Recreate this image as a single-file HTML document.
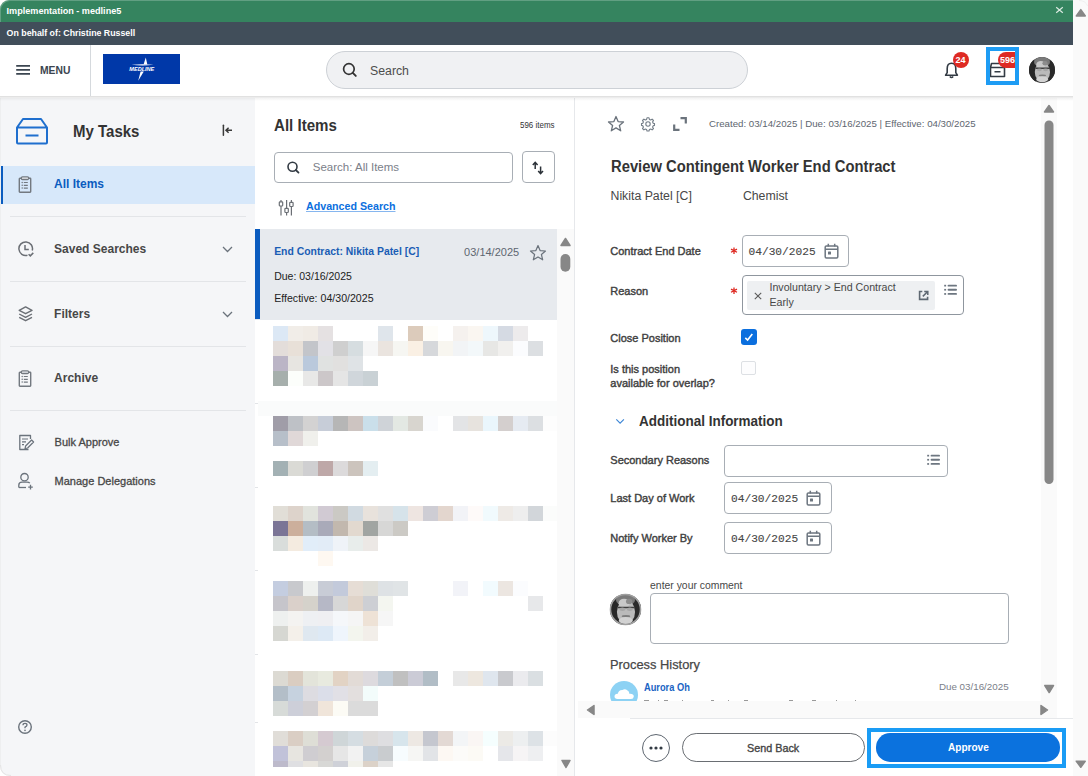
<!DOCTYPE html>
<html><head><meta charset="utf-8"><style>
html,body{margin:0;padding:0;width:1088px;height:776px;overflow:hidden;background:#fff;}
body{position:relative;font-family:"Liberation Sans",sans-serif;}
.t{position:absolute;white-space:nowrap;line-height:1;}
svg{overflow:visible;}
</style></head><body>
<div style="position:absolute;left:1073px;top:0px;width:15px;height:776px;background:#fafafa;"></div><svg style="position:absolute;left:1073px;top:0px" width="15" height="776" viewBox="0 0 15 776"><path d="M7.8 9.6 L12.3 16 L3.3 16 Z" fill="#878787" stroke="#878787" stroke-width="1.5" stroke-linejoin="round"/><path d="M3.3 761.2 L12.2 761.2 L7.8 767.3 Z" fill="#878787" stroke="#878787" stroke-width="1.5" stroke-linejoin="round"/><path d="M6 0.5 Q13 0.8 14.5 6" fill="none" stroke="#f0f0f0" stroke-width="1"/></svg><div style="position:absolute;left:0px;top:0px;width:1073px;height:22px;background:#35845f;border-top-left-radius:9px;box-shadow:inset 1px 1px 0 rgba(255,255,255,0.22);"></div><div style="position:absolute;left:0px;top:22px;width:1px;height:23px;background:rgba(255,255,255,0.12);"></div><div class="t" style="left:6.6px;top:6.60px;font-size:9.1px;color:#fff;font-weight:bold;">Implementation - medline5</div><svg style="position:absolute;left:1055px;top:6px" width="9" height="8" viewBox="0 0 9 8"><path d="M1.2 1.2 L7.8 6.8 M7.8 1.2 L1.2 6.8" stroke="#dcebe2" stroke-width="1.15"/></svg><div style="position:absolute;left:0px;top:22px;width:1073px;height:23px;background:#414e5a;"></div><div class="t" style="left:6.6px;top:29.05px;font-size:8.8px;color:#fff;font-weight:bold;">On behalf of: Christine Russell</div><div style="position:absolute;left:0px;top:45px;width:1073px;height:51px;background:#fff;"></div><svg style="position:absolute;left:16px;top:64px" width="15" height="11" viewBox="0 0 15 11"><path d="M0.2 1.8 H14 M0.2 5.8 H14 M0.2 9.8 H14" stroke="#3b4550" stroke-width="1.7"/></svg><div class="t" style="left:39.60px;top:66.00px;font-size:10.4px;color:#3b4550;font-weight:bold;transform:scaleX(0.9926);transform-origin:0 0;">MENU</div><div style="position:absolute;left:90px;top:45px;width:1px;height:51px;background:#d5d9dd;"></div><div style="position:absolute;left:103px;top:53.5px;width:77px;height:30.5px;background:#0038a8;"></div><svg style="position:absolute;left:103px;top:53.5px" width="77" height="31" viewBox="0 0 77 31"><path d="M42.8 3.6 L44.3 10.6 L40.6 10.6 Z" fill="#fff"/><path d="M28.5 10.8 Q39.5 9.6 50.5 10.8 Q39.5 12 28.5 10.8 Z" fill="#fff"/><text x="38.8" y="16.8" font-size="5.6" font-style="italic" font-weight="bold" fill="#fff" text-anchor="middle" font-family="Liberation Sans" textLength="25" lengthAdjust="spacingAndGlyphs">MEDLINE</text><path d="M37.6 17.6 L40.8 17.6 L35.2 26.8 Z" fill="#fff"/></svg><div style="position:absolute;left:326px;top:51px;width:422px;height:38px;background:#f0f1f3;border:1px solid #cdd1d6;border-radius:19px;box-sizing:border-box;"></div><svg style="position:absolute;left:342px;top:62px" width="16" height="16" viewBox="0 0 16 16"><circle cx="6.9" cy="7" r="5.3" fill="none" stroke="#333" stroke-width="1.7"/><path d="M10.8 10.9 L13.8 13.9" stroke="#333" stroke-width="1.9" stroke-linecap="round"/></svg><div class="t" style="left:370px;top:65.09px;font-size:12.3px;color:#4d4d4d;font-weight:normal;">Search</div><svg style="position:absolute;left:944px;top:61px" width="15" height="18" viewBox="0 0 15 18"><path d="M7.5 2.2 C4.6 2.2 3.2 4.6 3.2 7.4 V11.6 L1.6 14.2 H13.4 L11.8 11.6 V7.4 C11.8 4.6 10.4 2.2 7.5 2.2 Z" fill="none" stroke="#333b44" stroke-width="1.6" stroke-linejoin="round"/><path d="M5.8 15.6 Q7.5 17.6 9.2 15.6" fill="none" stroke="#333b44" stroke-width="1.5"/></svg><div style="position:absolute;left:953px;top:52px;width:16px;height:16px;background:#de2a23;border-radius:50%;"></div><div class="t" style="left:955.5px;top:55.98px;font-size:9px;color:#fff;font-weight:bold;">24</div><svg style="position:absolute;left:989px;top:62px" width="17" height="16" viewBox="0 0 17 16"><path d="M2.5 1.5 H13.5 L15.5 5.5 V14.5 H1.5 V5.5 Z M1.5 5.5 H15.5 M5.5 9.8 H11.5" fill="none" stroke="#333b44" stroke-width="1.6" stroke-linejoin="round"/></svg><div style="position:absolute;left:998px;top:52px;width:20px;height:16px;background:#de2a23;border-radius:8px 0 0 8px;"></div><div class="t" style="left:1000px;top:55.98px;font-size:9px;color:#fff;font-weight:bold;">596</div><div style="position:absolute;left:986px;top:47px;width:33px;height:38px;border:4px solid #1e9cf4;box-sizing:border-box;"></div><div style="position:absolute;left:1028.5px;top:57px;width:26px;height:26px"><svg width="26" height="26" viewBox="0 0 26 26" style="display:block"><defs><clipPath id="avc1"><circle cx="13" cy="13" r="13"/></clipPath></defs><g clip-path="url(#avc1)"><rect width="26" height="26" fill="#3c3c3c"/><ellipse cx="4" cy="15" rx="4.5" ry="12" fill="#262626"/><ellipse cx="22.5" cy="15" rx="4" ry="12" fill="#2a2a2a"/><ellipse cx="13" cy="5" rx="8" ry="5" fill="#7a7a7a"/><ellipse cx="13.4" cy="15" rx="7.6" ry="10" fill="#bababa"/><ellipse cx="11.8" cy="7.8" rx="4.6" ry="3.8" fill="#c8c8c8"/><ellipse cx="16" cy="6.2" rx="2.6" ry="2.2" fill="#8c8c8c"/><path d="M6.5 11.3 H21" stroke="#3f3f3f" stroke-width="1.4"/><ellipse cx="10.4" cy="12.8" rx="2.5" ry="1.4" fill="#a6a6a6"/><ellipse cx="16.6" cy="12.8" rx="2.5" ry="1.4" fill="#a6a6a6"/><ellipse cx="13.4" cy="18.6" rx="3.6" ry="1" fill="#7e7e7e"/><ellipse cx="13.2" cy="22.2" rx="5.8" ry="3" fill="#d2d2d2"/></g></svg></div><div style="position:absolute;left:0px;top:98px;width:255px;height:678px;background:#f5f6f8;border-bottom-left-radius:8px;"></div><svg style="position:absolute;left:15px;top:117px" width="34" height="28" viewBox="0 0 34 28"><path d="M8 2 H26 L32 10.5 V25.5 Q32 26.5 31 26.5 H3 Q2 26.5 2 25.5 V10.5 Z M2 10.5 H32 M10.5 18.5 H23.5" fill="none" stroke="#1f6fce" stroke-width="2" stroke-linejoin="round"/></svg><div class="t" style="left:73.40px;top:122.56px;font-size:17.3px;color:#333;font-weight:bold;transform:scaleX(0.8677);transform-origin:0 0;">My Tasks</div><svg style="position:absolute;left:221px;top:124px" width="12" height="12" viewBox="0 0 12 12"><path d="M2.4 1.2 V11.3" stroke="#3a3a3a" stroke-width="1.5" stroke-linecap="round"/><path d="M11 6.2 H5.2 M7.6 3.7 L5 6.2 L7.6 8.7" fill="none" stroke="#3a3a3a" stroke-width="1.5"/></svg><div style="position:absolute;left:0px;top:166px;width:255px;height:38px;background:#d7e8fa;"></div><div style="position:absolute;left:0px;top:166px;width:3px;height:38px;background:#0b5cbf;"></div><svg style="position:absolute;left:18px;top:176px" width="15" height="17" viewBox="0 0 15 17"><g stroke="#737980" fill="none"><rect x="1.3" y="2.2" width="11.4" height="14" rx="0.6" stroke-width="1.4"/><rect x="3.3" y="0.9" width="7.4" height="2.6" rx="1.2" stroke-width="1.3" fill="#eef1f4"/><path d="M5.8 6.5 H9.8 M5.8 9.3 H9.8 M5.8 12.1 H9.8" stroke-width="1.2"/></g><g fill="#737980"><circle cx="4.2" cy="6.5" r="0.75"/><circle cx="4.2" cy="9.3" r="0.75"/><circle cx="4.2" cy="12.1" r="0.75"/></g></svg><div class="t" style="left:54px;top:178.24px;font-size:12px;color:#0b5cbf;font-weight:bold;">All Items</div><div style="position:absolute;left:9.5px;top:216px;width:236px;height:1px;background:#e3e5e8;"></div><div style="position:absolute;left:9.5px;top:281px;width:236px;height:1px;background:#e3e5e8;"></div><div style="position:absolute;left:9.5px;top:345.5px;width:236px;height:1px;background:#e3e5e8;"></div><div style="position:absolute;left:9.5px;top:410px;width:236px;height:1px;background:#e3e5e8;"></div><svg style="position:absolute;left:17px;top:240px" width="18" height="18" viewBox="0 0 18 18"><g fill="none" stroke="#6b6f75" stroke-width="1.5"><path d="M10.46 15.27 A6.8 6.8 0 1 1 15.27 10.46"/><path d="M8 5 V9.4 H11.8"/><path d="M11.6 14.3 L13.3 15.9 L16.3 12.9"/></g></svg><div class="t" style="left:54.1px;top:243.14px;font-size:12px;color:#474747;font-weight:bold;">Saved Searches</div><svg style="position:absolute;left:222px;top:246px" width="11" height="7" viewBox="0 0 11 7"><path d="M1 1 L5.5 5.5 L10 1" fill="none" stroke="#6b737c" stroke-width="1.3"/></svg><svg style="position:absolute;left:18px;top:306px" width="16" height="16" viewBox="0 0 16 16"><g fill="none" stroke="#6b6f75" stroke-width="1.4" stroke-linejoin="round"><path d="M7.6 0.9 L14 4.3 L7.6 7.7 L1.2 4.3 Z"/><path d="M1.2 8 L7.6 11.4 L14 8"/><path d="M1.2 11.3 L7.6 14.7 L14 11.3"/></g></svg><div class="t" style="left:54.1px;top:307.54px;font-size:12px;color:#474747;font-weight:bold;">Filters</div><svg style="position:absolute;left:222px;top:310.5px" width="11" height="7" viewBox="0 0 11 7"><path d="M1 1 L5.5 5.5 L10 1" fill="none" stroke="#6b737c" stroke-width="1.3"/></svg><svg style="position:absolute;left:18px;top:369.5px" width="15" height="17" viewBox="0 0 15 17"><g stroke="#737980" fill="none"><rect x="1.3" y="2.2" width="11.4" height="14" rx="0.6" stroke-width="1.4"/><rect x="3.3" y="0.9" width="7.4" height="2.6" rx="1.2" stroke-width="1.3" fill="#eef1f4"/><path d="M5.8 6.5 H9.8 M5.8 9.3 H9.8 M5.8 12.1 H9.8" stroke-width="1.2"/></g><g fill="#737980"><circle cx="4.2" cy="6.5" r="0.75"/><circle cx="4.2" cy="9.3" r="0.75"/><circle cx="4.2" cy="12.1" r="0.75"/></g></svg><div class="t" style="left:54.1px;top:372.14px;font-size:12px;color:#474747;font-weight:bold;">Archive</div><svg style="position:absolute;left:18px;top:434px" width="17" height="17" viewBox="0 0 17 17"><path d="M10.5 15.5 H1.8 V1.5 H12.5 V5" fill="none" stroke="#6b737c" stroke-width="1.3" stroke-linejoin="round"/><path d="M4 5 H10 M4 7.8 H8 M4 10.6 H6" stroke="#6b737c" stroke-width="1.2"/><path d="M7 14.8 L7.6 12 L13.6 6 L15.6 8 L9.6 14 Z" fill="none" stroke="#6b737c" stroke-width="1.2" stroke-linejoin="round"/></svg><div class="t" style="left:54.6px;top:436.69px;font-size:11px;color:#474747;font-weight:normal;-webkit-text-stroke:0.3px #474747;">Bulk Approve</div><svg style="position:absolute;left:17px;top:472px" width="18" height="18" viewBox="0 0 18 18"><circle cx="7.5" cy="5.2" r="3.7" fill="none" stroke="#6b737c" stroke-width="1.3"/><path d="M1.8 15.5 V13.2 Q1.8 10.2 5 10.2 H10 Q12 10.2 12.8 11.2" fill="none" stroke="#6b737c" stroke-width="1.3"/><path d="M1.8 15.5 H9" stroke="#6b737c" stroke-width="1.3"/><path d="M13.5 12.8 V17.5 M11.2 15.2 H15.8" stroke="#6b737c" stroke-width="1.3"/></svg><div class="t" style="left:54.6px;top:475.59px;font-size:11px;color:#474747;font-weight:normal;-webkit-text-stroke:0.3px #474747;">Manage Delegations</div><svg style="position:absolute;left:17px;top:719px" width="16" height="16" viewBox="0 0 16 16"><circle cx="8" cy="8" r="6.3" fill="none" stroke="#6b737c" stroke-width="1.4"/><path d="M6 6.2 Q6 4.3 8 4.3 Q10 4.3 10 6 Q10 7.3 8 8.2 V9.3" fill="none" stroke="#6b737c" stroke-width="1.3"/><circle cx="8" cy="11.4" r="0.8" fill="#6b737c"/></svg><div style="position:absolute;left:255px;top:98px;width:319px;height:678px;background:#fff;"></div><div style="position:absolute;left:574px;top:98px;width:1px;height:678px;background:#e6e8eb;"></div><div class="t" style="left:274.30px;top:116.82px;font-size:16.4px;color:#333;font-weight:bold;transform:scaleX(0.9198);transform-origin:0 0;">All Items</div><div class="t" style="left:519.50px;top:121.15px;font-size:8.8px;color:#333;font-weight:normal;transform:scaleX(0.9044);transform-origin:0 0;">596 items</div><div style="position:absolute;left:274.3px;top:151.5px;width:238.5px;height:31.5px;border:1px solid #a8aeb5;border-radius:4px;box-sizing:border-box;"></div><svg style="position:absolute;left:280px;top:155px" width="30" height="25" viewBox="0 0 30 25"><circle cx="12.5" cy="11.7" r="4.5" fill="none" stroke="#333b44" stroke-width="1.6"/><path d="M15.8 15 L18.5 17.6" stroke="#333b44" stroke-width="1.8" stroke-linecap="round"/></svg><div class="t" style="left:312.8px;top:162.27px;font-size:11.5px;color:#7b8089;font-weight:normal;">Search: All Items</div><div style="position:absolute;left:522px;top:151px;width:32.5px;height:32px;border:1px solid #a8aeb5;border-radius:4px;box-sizing:border-box;"></div><svg style="position:absolute;left:522px;top:151px" width="34" height="34" viewBox="0 0 34 34"><path d="M13.2 18 V11.5 M10.8 14 L13.2 11.3 L15.6 14" fill="none" stroke="#2b3138" stroke-width="1.5"/><path d="M18.6 15.6 V22.5 M16.2 20 L18.6 22.7 L21 20" fill="none" stroke="#2b3138" stroke-width="1.5"/></svg><svg style="position:absolute;left:276px;top:198px" width="20" height="20" viewBox="0 0 20 20"><g stroke="#6b6f75" stroke-width="1.2" fill="#fff"><path d="M5 2 V17.5 M10.6 2 V17.5 M15.4 2 V17.5"/><rect x="3.3" y="3.8" width="3.4" height="4.2" rx="0.8"/><rect x="8.9" y="10.3" width="3.4" height="4.2" rx="0.8"/><rect x="13.7" y="4.3" width="3.4" height="4.2" rx="0.8"/></g></svg><div class="t" style="left:306.00px;top:201.05px;font-size:11.4px;color:#0b6fde;font-weight:bold;transform:scaleX(0.9362);transform-origin:0 0;text-decoration:underline;text-decoration-color:#86b6ef;text-underline-offset:1px;">Advanced Search</div><div style="position:absolute;left:255px;top:229px;width:302px;height:90.8px;background:#e7eaee;"></div><div style="position:absolute;left:255px;top:229px;width:5px;height:90.2px;background:#0b5cbf;"></div><div class="t" style="left:274.2px;top:246.80px;font-size:10.4px;color:#1a5db5;font-weight:bold;">End Contract: Nikita Patel [C]</div><div class="t" style="left:464.1px;top:246.59px;font-size:11px;color:#5e6670;font-weight:normal;">03/14/2025</div><svg style="position:absolute;left:529px;top:244px" width="18" height="17" viewBox="0 0 18 17"><path d="M9 1.5 L11.1 6.6 L16.5 7 L12.4 10.5 L13.7 15.8 L9 12.9 L4.3 15.8 L5.6 10.5 L1.5 7 L6.9 6.6 Z" fill="none" stroke="#6b737c" stroke-width="1.2" stroke-linejoin="round"/></svg><div class="t" style="left:274.2px;top:270.51px;font-size:10.5px;color:#222;font-weight:normal;">Due: 03/16/2025</div><div class="t" style="left:274.2px;top:292.63px;font-size:10.6px;color:#222;font-weight:normal;">Effective: 04/30/2025</div><div style="position:absolute;left:255px;top:722px;width:3px;height:1px;background:#e2e4e7"></div><div style="position:absolute;left:255px;top:654px;width:3px;height:1px;background:#e2e4e7"></div><div style="position:absolute;left:255px;top:570px;width:3px;height:1px;background:#e2e4e7"></div><div style="position:absolute;left:255px;top:486.5px;width:3px;height:1px;background:#e2e4e7"></div><div style="position:absolute;left:255px;top:403px;width:3px;height:1px;background:#e2e4e7"></div><div style="position:absolute;left:273.3px;top:325.8px;width:15.0px;height:15.0px;background:#DCE8F5"></div><div style="position:absolute;left:288.3px;top:325.8px;width:15.0px;height:15.0px;background:#F1EDE8"></div><div style="position:absolute;left:303.3px;top:325.8px;width:15.0px;height:15.0px;background:#F0EBE5"></div><div style="position:absolute;left:318.3px;top:325.8px;width:15.0px;height:15.0px;background:#E5E1E2"></div><div style="position:absolute;left:378.3px;top:325.8px;width:15.0px;height:15.0px;background:#DFE5EB"></div><div style="position:absolute;left:408.3px;top:325.8px;width:15.0px;height:15.0px;background:#DCCBBB"></div><div style="position:absolute;left:423.3px;top:325.8px;width:15.0px;height:15.0px;background:#FEFDF9"></div><div style="position:absolute;left:453.3px;top:325.8px;width:15.0px;height:15.0px;background:#F5F1EE"></div><div style="position:absolute;left:468.3px;top:325.8px;width:15.0px;height:15.0px;background:#FAF6F1"></div><div style="position:absolute;left:483.3px;top:325.8px;width:15.0px;height:15.0px;background:#EEF7FC"></div><div style="position:absolute;left:498.3px;top:325.8px;width:15.0px;height:15.0px;background:#D5DAE3"></div><div style="position:absolute;left:513.3px;top:325.8px;width:15.0px;height:15.0px;background:#EDEBEC"></div><div style="position:absolute;left:273.3px;top:340.8px;width:15.0px;height:15.0px;background:#E3DDDA"></div><div style="position:absolute;left:288.3px;top:340.8px;width:15.0px;height:15.0px;background:#E8E0D8"></div><div style="position:absolute;left:303.3px;top:340.8px;width:15.0px;height:15.0px;background:#C3C5CA"></div><div style="position:absolute;left:318.3px;top:340.8px;width:15.0px;height:15.0px;background:#E2E1E6"></div><div style="position:absolute;left:333.3px;top:340.8px;width:15.0px;height:15.0px;background:#CFCFCF"></div><div style="position:absolute;left:348.3px;top:340.8px;width:15.0px;height:15.0px;background:#D6DDE0"></div><div style="position:absolute;left:363.3px;top:340.8px;width:15.0px;height:15.0px;background:#F6F6F6"></div><div style="position:absolute;left:378.3px;top:340.8px;width:15.0px;height:15.0px;background:#EAE4DF"></div><div style="position:absolute;left:393.3px;top:340.8px;width:15.0px;height:15.0px;background:#F6F6F2"></div><div style="position:absolute;left:408.3px;top:340.8px;width:15.0px;height:15.0px;background:#FAF0E4"></div><div style="position:absolute;left:423.3px;top:340.8px;width:15.0px;height:15.0px;background:#D6D8DB"></div><div style="position:absolute;left:438.3px;top:340.8px;width:15.0px;height:15.0px;background:#F8F6F0"></div><div style="position:absolute;left:453.3px;top:340.8px;width:15.0px;height:15.0px;background:#F2F4F6"></div><div style="position:absolute;left:468.3px;top:340.8px;width:15.0px;height:15.0px;background:#F3F8FA"></div><div style="position:absolute;left:483.3px;top:340.8px;width:15.0px;height:15.0px;background:#E7E7E5"></div><div style="position:absolute;left:498.3px;top:340.8px;width:15.0px;height:15.0px;background:#F1F0EE"></div><div style="position:absolute;left:513.3px;top:340.8px;width:15.0px;height:15.0px;background:#FBFCFE"></div><div style="position:absolute;left:528.3px;top:340.8px;width:15.0px;height:15.0px;background:#DCDFE2"></div><div style="position:absolute;left:273.3px;top:355.8px;width:15.0px;height:15.0px;background:#BBB5C6"></div><div style="position:absolute;left:288.3px;top:355.8px;width:15.0px;height:15.0px;background:#E7E5E1"></div><div style="position:absolute;left:303.3px;top:355.8px;width:15.0px;height:15.0px;background:#BAC9DC"></div><div style="position:absolute;left:318.3px;top:355.8px;width:15.0px;height:15.0px;background:#E0E2E1"></div><div style="position:absolute;left:333.3px;top:355.8px;width:15.0px;height:15.0px;background:#E1E0DF"></div><div style="position:absolute;left:348.3px;top:355.8px;width:15.0px;height:15.0px;background:#DFE3E6"></div><div style="position:absolute;left:273.3px;top:370.8px;width:15.0px;height:15.0px;background:#A6AFAC"></div><div style="position:absolute;left:288.3px;top:370.8px;width:15.0px;height:15.0px;background:#FCFEFB"></div><div style="position:absolute;left:303.3px;top:370.8px;width:15.0px;height:15.0px;background:#E8E8E7"></div><div style="position:absolute;left:318.3px;top:370.8px;width:15.0px;height:15.0px;background:#CCC7C9"></div><div style="position:absolute;left:333.3px;top:370.8px;width:15.0px;height:15.0px;background:#E5E5E5"></div><div style="position:absolute;left:348.3px;top:370.8px;width:15.0px;height:15.0px;background:#D0D6DB"></div><div style="position:absolute;left:363.3px;top:370.8px;width:15.0px;height:15.0px;background:#C9D1D5"></div><div style="position:absolute;left:258.0px;top:400.8px;width:30.3px;height:15.0px;background:#FAFBFB"></div><div style="position:absolute;left:288.3px;top:400.8px;width:15.0px;height:15.0px;background:#FAFBFB"></div><div style="position:absolute;left:303.3px;top:400.8px;width:15.0px;height:15.0px;background:#FAFBFB"></div><div style="position:absolute;left:318.3px;top:400.8px;width:15.0px;height:15.0px;background:#FAFBFB"></div><div style="position:absolute;left:333.3px;top:400.8px;width:15.0px;height:15.0px;background:#FAFBFB"></div><div style="position:absolute;left:348.3px;top:400.8px;width:15.0px;height:15.0px;background:#FAFBFB"></div><div style="position:absolute;left:363.3px;top:400.8px;width:15.0px;height:15.0px;background:#FAFBFB"></div><div style="position:absolute;left:378.3px;top:400.8px;width:15.0px;height:15.0px;background:#FAFBFB"></div><div style="position:absolute;left:393.3px;top:400.8px;width:15.0px;height:15.0px;background:#FAFBFB"></div><div style="position:absolute;left:408.3px;top:400.8px;width:15.0px;height:15.0px;background:#FAFBFB"></div><div style="position:absolute;left:423.3px;top:400.8px;width:15.0px;height:15.0px;background:#FAFBFB"></div><div style="position:absolute;left:438.3px;top:400.8px;width:15.0px;height:15.0px;background:#FAFBFB"></div><div style="position:absolute;left:453.3px;top:400.8px;width:15.0px;height:15.0px;background:#FAFBFB"></div><div style="position:absolute;left:468.3px;top:400.8px;width:15.0px;height:15.0px;background:#FAFBFB"></div><div style="position:absolute;left:483.3px;top:400.8px;width:15.0px;height:15.0px;background:#FAFBFB"></div><div style="position:absolute;left:498.3px;top:400.8px;width:15.0px;height:15.0px;background:#FAFBFB"></div><div style="position:absolute;left:513.3px;top:400.8px;width:15.0px;height:15.0px;background:#FAFBFB"></div><div style="position:absolute;left:528.3px;top:400.8px;width:15.0px;height:15.0px;background:#FAFBFB"></div><div style="position:absolute;left:543.3px;top:400.8px;width:13.7px;height:15.0px;background:#FAFBFB"></div><div style="position:absolute;left:273.3px;top:415.8px;width:15.0px;height:15.0px;background:#A09DA8"></div><div style="position:absolute;left:288.3px;top:415.8px;width:15.0px;height:15.0px;background:#BEC1C6"></div><div style="position:absolute;left:303.3px;top:415.8px;width:15.0px;height:15.0px;background:#D3D2D2"></div><div style="position:absolute;left:318.3px;top:415.8px;width:15.0px;height:15.0px;background:#C7CDD8"></div><div style="position:absolute;left:333.3px;top:415.8px;width:15.0px;height:15.0px;background:#B6B6B6"></div><div style="position:absolute;left:348.3px;top:415.8px;width:15.0px;height:15.0px;background:#CDC4C1"></div><div style="position:absolute;left:363.3px;top:415.8px;width:15.0px;height:15.0px;background:#CADFEA"></div><div style="position:absolute;left:378.3px;top:415.8px;width:15.0px;height:15.0px;background:#CFD3D8"></div><div style="position:absolute;left:393.3px;top:415.8px;width:15.0px;height:15.0px;background:#E3E8E3"></div><div style="position:absolute;left:408.3px;top:415.8px;width:15.0px;height:15.0px;background:#D8D5CF"></div><div style="position:absolute;left:423.3px;top:415.8px;width:15.0px;height:15.0px;background:#FAFBFD"></div><div style="position:absolute;left:453.3px;top:415.8px;width:15.0px;height:15.0px;background:#E3E4E6"></div><div style="position:absolute;left:468.3px;top:415.8px;width:15.0px;height:15.0px;background:#E7E3DE"></div><div style="position:absolute;left:483.3px;top:415.8px;width:15.0px;height:15.0px;background:#EAF6FC"></div><div style="position:absolute;left:498.3px;top:415.8px;width:15.0px;height:15.0px;background:#D4CFCE"></div><div style="position:absolute;left:513.3px;top:415.8px;width:15.0px;height:15.0px;background:#E6EBF2"></div><div style="position:absolute;left:528.3px;top:415.8px;width:15.0px;height:15.0px;background:#DCDFE2"></div><div style="position:absolute;left:543.3px;top:415.8px;width:13.7px;height:15.0px;background:#FDFDFD"></div><div style="position:absolute;left:273.3px;top:430.8px;width:15.0px;height:15.0px;background:#B7BFC9"></div><div style="position:absolute;left:288.3px;top:430.8px;width:15.0px;height:15.0px;background:#E0D8D8"></div><div style="position:absolute;left:303.3px;top:430.8px;width:15.0px;height:15.0px;background:#F0F0EC"></div><div style="position:absolute;left:273.3px;top:460.8px;width:15.0px;height:15.0px;background:#A3B1B4"></div><div style="position:absolute;left:288.3px;top:460.8px;width:15.0px;height:15.0px;background:#DADAD5"></div><div style="position:absolute;left:303.3px;top:460.8px;width:15.0px;height:15.0px;background:#CFCFD1"></div><div style="position:absolute;left:318.3px;top:460.8px;width:15.0px;height:15.0px;background:#BEA8A8"></div><div style="position:absolute;left:333.3px;top:460.8px;width:15.0px;height:15.0px;background:#DCDADB"></div><div style="position:absolute;left:348.3px;top:460.8px;width:15.0px;height:15.0px;background:#CCC4BD"></div><div style="position:absolute;left:363.3px;top:460.8px;width:15.0px;height:15.0px;background:#E4EEF1"></div><div style="position:absolute;left:273.3px;top:505.8px;width:15.0px;height:15.0px;background:#E1DED7"></div><div style="position:absolute;left:288.3px;top:505.8px;width:15.0px;height:15.0px;background:#DDD3CB"></div><div style="position:absolute;left:303.3px;top:505.8px;width:15.0px;height:15.0px;background:#E1E3DD"></div><div style="position:absolute;left:318.3px;top:505.8px;width:15.0px;height:15.0px;background:#D1CAD3"></div><div style="position:absolute;left:333.3px;top:505.8px;width:15.0px;height:15.0px;background:#CBC9C4"></div><div style="position:absolute;left:348.3px;top:505.8px;width:15.0px;height:15.0px;background:#D1DAE1"></div><div style="position:absolute;left:363.3px;top:505.8px;width:15.0px;height:15.0px;background:#E8E2DC"></div><div style="position:absolute;left:378.3px;top:505.8px;width:15.0px;height:15.0px;background:#E0E0E0"></div><div style="position:absolute;left:393.3px;top:505.8px;width:15.0px;height:15.0px;background:#D6E3EA"></div><div style="position:absolute;left:408.3px;top:505.8px;width:15.0px;height:15.0px;background:#EEE5E1"></div><div style="position:absolute;left:423.3px;top:505.8px;width:15.0px;height:15.0px;background:#CECDD4"></div><div style="position:absolute;left:438.3px;top:505.8px;width:15.0px;height:15.0px;background:#E3D6CE"></div><div style="position:absolute;left:453.3px;top:505.8px;width:15.0px;height:15.0px;background:#F2F3F7"></div><div style="position:absolute;left:468.3px;top:505.8px;width:15.0px;height:15.0px;background:#FEFAF9"></div><div style="position:absolute;left:483.3px;top:505.8px;width:15.0px;height:15.0px;background:#F1FAFD"></div><div style="position:absolute;left:498.3px;top:505.8px;width:15.0px;height:15.0px;background:#EEEAE6"></div><div style="position:absolute;left:513.3px;top:505.8px;width:15.0px;height:15.0px;background:#EEEEEE"></div><div style="position:absolute;left:528.3px;top:505.8px;width:15.0px;height:15.0px;background:#D2D6DA"></div><div style="position:absolute;left:543.3px;top:505.8px;width:13.7px;height:15.0px;background:#FBFCFB"></div><div style="position:absolute;left:273.3px;top:520.8px;width:15.0px;height:15.0px;background:#7B7596"></div><div style="position:absolute;left:288.3px;top:520.8px;width:15.0px;height:15.0px;background:#CCAF9C"></div><div style="position:absolute;left:303.3px;top:520.8px;width:15.0px;height:15.0px;background:#B4BDC5"></div><div style="position:absolute;left:318.3px;top:520.8px;width:15.0px;height:15.0px;background:#A9AAB9"></div><div style="position:absolute;left:333.3px;top:520.8px;width:15.0px;height:15.0px;background:#C2B8AE"></div><div style="position:absolute;left:348.3px;top:520.8px;width:15.0px;height:15.0px;background:#E2D9CF"></div><div style="position:absolute;left:363.3px;top:520.8px;width:15.0px;height:15.0px;background:#A1A5A2"></div><div style="position:absolute;left:378.3px;top:520.8px;width:15.0px;height:15.0px;background:#D7D7D6"></div><div style="position:absolute;left:393.3px;top:520.8px;width:15.0px;height:15.0px;background:#CCCAC5"></div><div style="position:absolute;left:273.3px;top:535.8px;width:15.0px;height:15.0px;background:#D9DDDB"></div><div style="position:absolute;left:288.3px;top:535.8px;width:15.0px;height:15.0px;background:#F4EBE0"></div><div style="position:absolute;left:303.3px;top:535.8px;width:15.0px;height:15.0px;background:#E1EDF9"></div><div style="position:absolute;left:318.3px;top:535.8px;width:15.0px;height:15.0px;background:#E2ECF7"></div><div style="position:absolute;left:333.3px;top:535.8px;width:15.0px;height:15.0px;background:#EFF3F8"></div><div style="position:absolute;left:348.3px;top:535.8px;width:15.0px;height:15.0px;background:#E8EDEB"></div><div style="position:absolute;left:363.3px;top:535.8px;width:15.0px;height:15.0px;background:#ECE8E5"></div><div style="position:absolute;left:318.3px;top:550.8px;width:15.0px;height:15.0px;background:#FEF8F1"></div><div style="position:absolute;left:273.3px;top:580.8px;width:15.0px;height:15.0px;background:#C4CDE0"></div><div style="position:absolute;left:288.3px;top:580.8px;width:15.0px;height:15.0px;background:#C8C9CD"></div><div style="position:absolute;left:303.3px;top:580.8px;width:15.0px;height:15.0px;background:#EEF0EE"></div><div style="position:absolute;left:318.3px;top:580.8px;width:15.0px;height:15.0px;background:#C8CCD6"></div><div style="position:absolute;left:333.3px;top:580.8px;width:15.0px;height:15.0px;background:#C3CADB"></div><div style="position:absolute;left:348.3px;top:580.8px;width:15.0px;height:15.0px;background:#E6DDD5"></div><div style="position:absolute;left:363.3px;top:580.8px;width:15.0px;height:15.0px;background:#DFDED8"></div><div style="position:absolute;left:378.3px;top:580.8px;width:15.0px;height:15.0px;background:#DEE2E5"></div><div style="position:absolute;left:393.3px;top:580.8px;width:15.0px;height:15.0px;background:#E0E4E6"></div><div style="position:absolute;left:453.3px;top:580.8px;width:15.0px;height:15.0px;background:#F2F3F8"></div><div style="position:absolute;left:483.3px;top:580.8px;width:15.0px;height:15.0px;background:#F2FBFE"></div><div style="position:absolute;left:498.3px;top:580.8px;width:15.0px;height:15.0px;background:#ECE6E1"></div><div style="position:absolute;left:513.3px;top:580.8px;width:15.0px;height:15.0px;background:#FBFCFE"></div><div style="position:absolute;left:273.3px;top:595.8px;width:15.0px;height:15.0px;background:#C6C5CB"></div><div style="position:absolute;left:288.3px;top:595.8px;width:15.0px;height:15.0px;background:#DAD0CA"></div><div style="position:absolute;left:303.3px;top:595.8px;width:15.0px;height:15.0px;background:#D5D2CB"></div><div style="position:absolute;left:318.3px;top:595.8px;width:15.0px;height:15.0px;background:#B6B8C6"></div><div style="position:absolute;left:333.3px;top:595.8px;width:15.0px;height:15.0px;background:#D7D7D7"></div><div style="position:absolute;left:348.3px;top:595.8px;width:15.0px;height:15.0px;background:#E0D4C9"></div><div style="position:absolute;left:363.3px;top:595.8px;width:15.0px;height:15.0px;background:#CDCFD4"></div><div style="position:absolute;left:378.3px;top:595.8px;width:15.0px;height:15.0px;background:#F4F6F0"></div><div style="position:absolute;left:528.3px;top:595.8px;width:15.0px;height:15.0px;background:#E7E8EA"></div><div style="position:absolute;left:273.3px;top:610.8px;width:15.0px;height:15.0px;background:#EEF0EF"></div><div style="position:absolute;left:288.3px;top:610.8px;width:15.0px;height:15.0px;background:#F4F3F1"></div><div style="position:absolute;left:303.3px;top:610.8px;width:15.0px;height:15.0px;background:#EEF0F3"></div><div style="position:absolute;left:318.3px;top:610.8px;width:15.0px;height:15.0px;background:#EFEFF2"></div><div style="position:absolute;left:333.3px;top:610.8px;width:15.0px;height:15.0px;background:#F5F7FA"></div><div style="position:absolute;left:348.3px;top:610.8px;width:15.0px;height:15.0px;background:#F5F5F5"></div><div style="position:absolute;left:363.3px;top:610.8px;width:15.0px;height:15.0px;background:#EEE2D6"></div><div style="position:absolute;left:378.3px;top:610.8px;width:15.0px;height:15.0px;background:#F6F6F6"></div><div style="position:absolute;left:273.3px;top:625.8px;width:15.0px;height:15.0px;background:#D6D7D2"></div><div style="position:absolute;left:288.3px;top:625.8px;width:15.0px;height:15.0px;background:#F4F0EA"></div><div style="position:absolute;left:303.3px;top:625.8px;width:15.0px;height:15.0px;background:#DFE8F0"></div><div style="position:absolute;left:318.3px;top:625.8px;width:15.0px;height:15.0px;background:#DDE9F5"></div><div style="position:absolute;left:333.3px;top:625.8px;width:15.0px;height:15.0px;background:#EFF5FC"></div><div style="position:absolute;left:348.3px;top:625.8px;width:15.0px;height:15.0px;background:#F3F5EE"></div><div style="position:absolute;left:363.3px;top:625.8px;width:15.0px;height:15.0px;background:#F2EEE9"></div><div style="position:absolute;left:273.3px;top:670.8px;width:15.0px;height:15.0px;background:#DCDAD3"></div><div style="position:absolute;left:288.3px;top:670.8px;width:15.0px;height:15.0px;background:#DACDC1"></div><div style="position:absolute;left:303.3px;top:670.8px;width:15.0px;height:15.0px;background:#E3E4DA"></div><div style="position:absolute;left:318.3px;top:670.8px;width:15.0px;height:15.0px;background:#E8EADF"></div><div style="position:absolute;left:333.3px;top:670.8px;width:15.0px;height:15.0px;background:#E2D3C4"></div><div style="position:absolute;left:348.3px;top:670.8px;width:15.0px;height:15.0px;background:#E2DBD6"></div><div style="position:absolute;left:363.3px;top:670.8px;width:15.0px;height:15.0px;background:#DDDADE"></div><div style="position:absolute;left:378.3px;top:670.8px;width:15.0px;height:15.0px;background:#C4CED8"></div><div style="position:absolute;left:393.3px;top:670.8px;width:15.0px;height:15.0px;background:#C0C0C0"></div><div style="position:absolute;left:408.3px;top:670.8px;width:15.0px;height:15.0px;background:#CBCBD6"></div><div style="position:absolute;left:423.3px;top:670.8px;width:15.0px;height:15.0px;background:#B1BDC6"></div><div style="position:absolute;left:453.3px;top:670.8px;width:15.0px;height:15.0px;background:#E8E8E8"></div><div style="position:absolute;left:468.3px;top:670.8px;width:15.0px;height:15.0px;background:#EDE7DF"></div><div style="position:absolute;left:483.3px;top:670.8px;width:15.0px;height:15.0px;background:#DFE6EE"></div><div style="position:absolute;left:498.3px;top:670.8px;width:15.0px;height:15.0px;background:#C9CACE"></div><div style="position:absolute;left:513.3px;top:670.8px;width:15.0px;height:15.0px;background:#EBEBEE"></div><div style="position:absolute;left:528.3px;top:670.8px;width:15.0px;height:15.0px;background:#DADFE2"></div><div style="position:absolute;left:273.3px;top:685.8px;width:15.0px;height:15.0px;background:#B3BEC8"></div><div style="position:absolute;left:288.3px;top:685.8px;width:15.0px;height:15.0px;background:#C6D2DF"></div><div style="position:absolute;left:303.3px;top:685.8px;width:15.0px;height:15.0px;background:#DDDCE1"></div><div style="position:absolute;left:318.3px;top:685.8px;width:15.0px;height:15.0px;background:#DBDEE9"></div><div style="position:absolute;left:333.3px;top:685.8px;width:15.0px;height:15.0px;background:#E1E0E6"></div><div style="position:absolute;left:348.3px;top:685.8px;width:15.0px;height:15.0px;background:#E3DFDE"></div><div style="position:absolute;left:363.3px;top:685.8px;width:15.0px;height:15.0px;background:#F3FCFB"></div><div style="position:absolute;left:273.3px;top:700.8px;width:15.0px;height:15.0px;background:#D7DBD8"></div><div style="position:absolute;left:288.3px;top:700.8px;width:15.0px;height:15.0px;background:#CDCFD9"></div><div style="position:absolute;left:303.3px;top:700.8px;width:15.0px;height:15.0px;background:#D3D0D2"></div><div style="position:absolute;left:318.3px;top:700.8px;width:15.0px;height:15.0px;background:#F0E5DA"></div><div style="position:absolute;left:333.3px;top:700.8px;width:15.0px;height:15.0px;background:#FCFBF5"></div><div style="position:absolute;left:348.3px;top:700.8px;width:15.0px;height:15.0px;background:#DBDBDB"></div><div style="position:absolute;left:363.3px;top:700.8px;width:15.0px;height:15.0px;background:#DBDBDB"></div><div style="position:absolute;left:273.3px;top:730.8px;width:15.0px;height:15.0px;background:#E0DDD8"></div><div style="position:absolute;left:288.3px;top:730.8px;width:15.0px;height:15.0px;background:#DACEC4"></div><div style="position:absolute;left:303.3px;top:730.8px;width:15.0px;height:15.0px;background:#DEDED6"></div><div style="position:absolute;left:318.3px;top:730.8px;width:15.0px;height:15.0px;background:#D5CAD1"></div><div style="position:absolute;left:333.3px;top:730.8px;width:15.0px;height:15.0px;background:#CFD6D8"></div><div style="position:absolute;left:348.3px;top:730.8px;width:15.0px;height:15.0px;background:#D5DDE2"></div><div style="position:absolute;left:363.3px;top:730.8px;width:15.0px;height:15.0px;background:#DDDBDA"></div><div style="position:absolute;left:378.3px;top:730.8px;width:15.0px;height:15.0px;background:#DEDEE1"></div><div style="position:absolute;left:393.3px;top:730.8px;width:15.0px;height:15.0px;background:#D7E5EC"></div><div style="position:absolute;left:408.3px;top:730.8px;width:15.0px;height:15.0px;background:#EDE8E3"></div><div style="position:absolute;left:423.3px;top:730.8px;width:15.0px;height:15.0px;background:#C5C7CF"></div><div style="position:absolute;left:438.3px;top:730.8px;width:15.0px;height:15.0px;background:#E3D9D4"></div><div style="position:absolute;left:453.3px;top:730.8px;width:15.0px;height:15.0px;background:#F3F5F7"></div><div style="position:absolute;left:468.3px;top:730.8px;width:15.0px;height:15.0px;background:#FAF6F4"></div><div style="position:absolute;left:483.3px;top:730.8px;width:15.0px;height:15.0px;background:#F5FEFE"></div><div style="position:absolute;left:498.3px;top:730.8px;width:15.0px;height:15.0px;background:#ECEAE6"></div><div style="position:absolute;left:513.3px;top:730.8px;width:15.0px;height:15.0px;background:#EDEFF0"></div><div style="position:absolute;left:528.3px;top:730.8px;width:15.0px;height:15.0px;background:#DDE2E6"></div><div style="position:absolute;left:543.3px;top:730.8px;width:13.7px;height:15.0px;background:#FCFCFC"></div><div style="position:absolute;left:273.3px;top:745.8px;width:15.0px;height:15.0px;background:#C1C2D9"></div><div style="position:absolute;left:288.3px;top:745.8px;width:15.0px;height:15.0px;background:#E7E5E0"></div><div style="position:absolute;left:303.3px;top:745.8px;width:15.0px;height:15.0px;background:#CFCDD1"></div><div style="position:absolute;left:318.3px;top:745.8px;width:15.0px;height:15.0px;background:#D3D0CF"></div><div style="position:absolute;left:333.3px;top:745.8px;width:15.0px;height:15.0px;background:#E6E6E6"></div><div style="position:absolute;left:348.3px;top:745.8px;width:15.0px;height:15.0px;background:#F2F2F2"></div><div style="position:absolute;left:363.3px;top:745.8px;width:15.0px;height:15.0px;background:#C6D0DA"></div><div style="position:absolute;left:378.3px;top:745.8px;width:15.0px;height:15.0px;background:#C9CCCF"></div><div style="position:absolute;left:393.3px;top:745.8px;width:15.0px;height:15.0px;background:#F7FCFE"></div><div style="position:absolute;left:408.3px;top:745.8px;width:15.0px;height:15.0px;background:#F6F6F4"></div><div style="position:absolute;left:423.3px;top:745.8px;width:15.0px;height:15.0px;background:#E2E4E7"></div><div style="position:absolute;left:438.3px;top:745.8px;width:15.0px;height:15.0px;background:#FDF8F3"></div><div style="position:absolute;left:453.3px;top:745.8px;width:15.0px;height:15.0px;background:#FCFBF9"></div><div style="position:absolute;left:468.3px;top:745.8px;width:15.0px;height:15.0px;background:#FCFAF5"></div><div style="position:absolute;left:498.3px;top:745.8px;width:15.0px;height:15.0px;background:#E5E6EA"></div><div style="position:absolute;left:513.3px;top:745.8px;width:15.0px;height:15.0px;background:#F6F4F5"></div><div style="position:absolute;left:528.3px;top:745.8px;width:15.0px;height:15.0px;background:#EEEFF1"></div><div style="position:absolute;left:273.3px;top:760.8px;width:15.0px;height:6.6px;background:#BDBACB"></div><div style="position:absolute;left:288.3px;top:760.8px;width:15.0px;height:6.6px;background:#DFDFE2"></div><div style="position:absolute;left:303.3px;top:760.8px;width:15.0px;height:6.6px;background:#E8E5DF"></div><div style="position:absolute;left:318.3px;top:760.8px;width:15.0px;height:6.6px;background:#D8D8D6"></div><div style="position:absolute;left:333.3px;top:760.8px;width:15.0px;height:6.6px;background:#CFD1D8"></div><div style="position:absolute;left:348.3px;top:760.8px;width:15.0px;height:6.6px;background:#F1F1EB"></div><div style="position:absolute;left:363.3px;top:760.8px;width:15.0px;height:6.6px;background:#DCD2C8"></div><div style="position:absolute;left:378.3px;top:760.8px;width:15.0px;height:6.6px;background:#E6E6E6"></div><div style="position:absolute;left:557px;top:760.5px;width:4.5px;height:7px;background:#dedede;"></div><div style="position:absolute;left:557px;top:229px;width:17px;height:547px;background:#fafafa;"></div><svg style="position:absolute;left:557px;top:229px" width="17" height="547" viewBox="0 0 17 547"><path d="M8.5 9.5 L13 16.5 L4 16.5 Z" fill="#878787" stroke="#878787" stroke-width="1.5" stroke-linejoin="round"/><rect x="3.5" y="25" width="9.8" height="17.7" rx="4.9" fill="#878787"/><path d="M5 531.5 L13 531.5 L9 538.5 Z" fill="#878787" stroke="#878787" stroke-width="1.5" stroke-linejoin="round"/></svg><div style="position:absolute;left:575px;top:98px;width:498px;height:678px;background:#fff;"></div><svg style="position:absolute;left:607px;top:115.2px" width="18" height="17" viewBox="0 0 18 17"><path d="M9 1.5 L11.1 6.6 L16.5 7 L12.4 10.5 L13.7 15.8 L9 12.9 L4.3 15.8 L5.6 10.5 L1.5 7 L6.9 6.6 Z" fill="none" stroke="#6b737c" stroke-width="1.3" stroke-linejoin="round"/></svg><svg style="position:absolute;left:640.8px;top:116.6px" width="14" height="15" viewBox="0 0 14 15"><g fill="none" stroke="#737d87" stroke-width="1.1"><circle cx="7" cy="7" r="2.2"/><path d="M6 0.8 H8 L8.4 2.4 L9.7 3 L11.1 2.1 L12.5 3.5 L11.6 4.9 L12.2 6.2 L13.5 6.6 V8.4 L12.2 8.8 L11.6 10.1 L12.5 11.5 L11.1 12.9 L9.7 12 L8.4 12.6 L8 14 H6 L5.6 12.6 L4.3 12 L2.9 12.9 L1.5 11.5 L2.4 10.1 L1.8 8.8 L0.5 8.4 V6.6 L1.8 6.2 L2.4 4.9 L1.5 3.5 L2.9 2.1 L4.3 3 L5.6 2.4 Z" stroke-linejoin="round"/></g></svg><svg style="position:absolute;left:672.5px;top:117px" width="14" height="14" viewBox="0 0 14 14"><path d="M1.2 7.5 V12.8 H6.5 M7.5 1.2 H12.8 V6.5" fill="none" stroke="#6b737c" stroke-width="2.2"/></svg><div class="t" style="left:709px;top:119.19px;font-size:9.7px;color:#5e6670;font-weight:normal;">Created: 03/14/2025 | Due: 03/16/2025 | Effective: 04/30/2025</div><div class="t" style="left:610.50px;top:159.29px;font-size:15.6px;color:#333;font-weight:bold;transform:scaleX(0.9472);transform-origin:0 0;">Review Contingent Worker End Contract</div><div class="t" style="left:610.5px;top:189.79px;font-size:12.3px;color:#474747;font-weight:normal;">Nikita Patel [C]</div><div class="t" style="left:742.9px;top:189.79px;font-size:12.3px;color:#474747;font-weight:normal;">Chemist</div><div class="t" style="left:610.3px;top:245.79px;font-size:11px;color:#404040;font-weight:normal;-webkit-text-stroke:0.4px #404040;">Contract End Date</div><svg style="position:absolute;left:729.5px;top:247.3px" width="8" height="8" viewBox="0 0 8 8"><path d="M4 0.4 V7 M1 2.1 L7 5.3 M7 2.1 L1 5.3" stroke="#de2a23" stroke-width="1.3"/></svg><div style="position:absolute;left:741.5px;top:235.3px;width:107.5px;height:32px;border:1px solid #a8aeb5;border-radius:4px;box-sizing:border-box;"></div><div class="t" style="left:748.5px;top:246.82px;font-size:11.2px;color:#454545;font-weight:normal;font-family:'Liberation Mono',monospace;-webkit-text-stroke:0.1px #454545;">04/30/2025</div><svg style="position:absolute;left:823.7px;top:243.0px" width="15" height="16" viewBox="0 0 15 16"><g fill="none" stroke="#6d7680" stroke-width="1.5"><rect x="1.2" y="2.9" width="12.6" height="12" rx="1.2"/><path d="M1.2 6.2 H13.8 M4.3 0.8 V3.5 M10.7 0.8 V3.5"/></g><rect x="4" y="8.6" width="3" height="3" rx="0.4" fill="#6d7680"/></svg><div class="t" style="left:610.3px;top:285.69px;font-size:11px;color:#404040;font-weight:normal;-webkit-text-stroke:0.4px #404040;">Reason</div><svg style="position:absolute;left:729.5px;top:287.3px" width="8" height="8" viewBox="0 0 8 8"><path d="M4 0.4 V7 M1 2.1 L7 5.3 M7 2.1 L1 5.3" stroke="#de2a23" stroke-width="1.3"/></svg><div style="position:absolute;left:741.5px;top:275.2px;width:222.5px;height:40.3px;border:1px solid #8f969e;border-radius:4px;box-sizing:border-box;"></div><div style="position:absolute;left:746.5px;top:280.8px;width:188.5px;height:28.8px;background:#eef0f2;border-radius:2px;"></div><svg style="position:absolute;left:752.5px;top:290.5px" width="10" height="10" viewBox="0 0 10 10"><path d="M1.8 1.8 L8.2 8.2 M8.2 1.8 L1.8 8.2" stroke="#5a5a5a" stroke-width="1.1"/></svg><div class="t" style="left:769.5px;top:281.98px;font-size:10.65px;color:#474747;font-weight:normal;">Involuntary &gt; End Contract</div><div class="t" style="left:769.5px;top:296.58px;font-size:10.65px;color:#474747;font-weight:normal;">Early</div><svg style="position:absolute;left:917.5px;top:290.3px" width="12" height="12" viewBox="0 0 12 12"><path d="M4.3 1.5 H1.6 V9.4 H9.6 V6.8" fill="none" stroke="#5e6872" stroke-width="1.6"/><path d="M6.2 1.4 H9.8 V5 M9.5 1.7 L4.8 6.4" fill="none" stroke="#5e6872" stroke-width="1.5"/></svg><svg style="position:absolute;left:943.5px;top:284px" width="14" height="12" viewBox="0 0 14 12"><g fill="#6d7680"><rect x="0.2" y="0.8" width="1.9" height="1.7"/><rect x="0.2" y="4.9" width="1.9" height="1.7"/><rect x="0.2" y="9.1" width="1.9" height="1.7"/><rect x="3.6" y="0.75" width="9.4" height="1.8" rx="0.9"/><rect x="3.6" y="4.85" width="9.4" height="1.8" rx="0.9"/><rect x="3.6" y="9.05" width="9.4" height="1.8" rx="0.9"/></g></svg><div class="t" style="left:610.3px;top:332.69px;font-size:11px;color:#404040;font-weight:normal;-webkit-text-stroke:0.4px #404040;">Close Position</div><div style="position:absolute;left:740.7px;top:329.3px;width:16px;height:16.2px;background:#0b6fde;border-radius:3px;"></div><svg style="position:absolute;left:740.7px;top:329.3px" width="16" height="16" viewBox="0 0 16 16"><path d="M4.3 8.9 L6.6 11 L11.3 4.9" fill="none" stroke="#fff" stroke-width="1.6"/></svg><div class="t" style="left:610.3px;top:363.69px;font-size:11px;color:#404040;font-weight:normal;-webkit-text-stroke:0.4px #404040;">Is this position</div><div class="t" style="left:610.3px;top:377.99px;font-size:11px;color:#404040;font-weight:normal;-webkit-text-stroke:0.4px #404040;">available for overlap?</div><div style="position:absolute;left:741px;top:361.3px;width:15px;height:13.5px;border:1px solid #dde0e4;border-radius:2px;box-sizing:border-box;background:#fdfdfe;"></div><svg style="position:absolute;left:615px;top:418px" width="10" height="7" viewBox="0 0 10 7"><path d="M1.3 1.3 L5.1 5.1 L8.9 1.3" fill="none" stroke="#3d86d6" stroke-width="1.15"/></svg><div class="t" style="left:638.50px;top:412.90px;font-size:15px;color:#333;font-weight:bold;transform:scaleX(0.8989);transform-origin:0 0;">Additional Information</div><div class="t" style="left:610.3px;top:455.49px;font-size:11px;color:#404040;font-weight:normal;-webkit-text-stroke:0.4px #404040;">Secondary Reasons</div><div style="position:absolute;left:724px;top:445px;width:223.5px;height:31.5px;border:1px solid #a8aeb5;border-radius:4px;box-sizing:border-box;"></div><svg style="position:absolute;left:926.5px;top:454px" width="14" height="12" viewBox="0 0 14 12"><g fill="#6d7680"><rect x="0.2" y="0.8" width="1.9" height="1.7"/><rect x="0.2" y="4.9" width="1.9" height="1.7"/><rect x="0.2" y="9.1" width="1.9" height="1.7"/><rect x="3.6" y="0.75" width="9.4" height="1.8" rx="0.9"/><rect x="3.6" y="4.85" width="9.4" height="1.8" rx="0.9"/><rect x="3.6" y="9.05" width="9.4" height="1.8" rx="0.9"/></g></svg><div class="t" style="left:610.3px;top:493.49px;font-size:11px;color:#404040;font-weight:normal;-webkit-text-stroke:0.4px #404040;">Last Day of Work</div><div style="position:absolute;left:724px;top:482.3px;width:107.5px;height:32px;border:1px solid #a8aeb5;border-radius:4px;box-sizing:border-box;"></div><div class="t" style="left:731px;top:493.82px;font-size:11.2px;color:#454545;font-weight:normal;font-family:'Liberation Mono',monospace;-webkit-text-stroke:0.1px #454545;">04/30/2025</div><svg style="position:absolute;left:806.2px;top:490.0px" width="15" height="16" viewBox="0 0 15 16"><g fill="none" stroke="#6d7680" stroke-width="1.5"><rect x="1.2" y="2.9" width="12.6" height="12" rx="1.2"/><path d="M1.2 6.2 H13.8 M4.3 0.8 V3.5 M10.7 0.8 V3.5"/></g><rect x="4" y="8.6" width="3" height="3" rx="0.4" fill="#6d7680"/></svg><div class="t" style="left:610.3px;top:533.19px;font-size:11px;color:#404040;font-weight:normal;-webkit-text-stroke:0.4px #404040;">Notify Worker By</div><div style="position:absolute;left:724px;top:522px;width:107.5px;height:32px;border:1px solid #a8aeb5;border-radius:4px;box-sizing:border-box;"></div><div class="t" style="left:731px;top:533.52px;font-size:11.2px;color:#454545;font-weight:normal;font-family:'Liberation Mono',monospace;-webkit-text-stroke:0.1px #454545;">04/30/2025</div><svg style="position:absolute;left:806.2px;top:529.7px" width="15" height="16" viewBox="0 0 15 16"><g fill="none" stroke="#6d7680" stroke-width="1.5"><rect x="1.2" y="2.9" width="12.6" height="12" rx="1.2"/><path d="M1.2 6.2 H13.8 M4.3 0.8 V3.5 M10.7 0.8 V3.5"/></g><rect x="4" y="8.6" width="3" height="3" rx="0.4" fill="#6d7680"/></svg><div class="t" style="left:650.1px;top:580.80px;font-size:10.4px;color:#474747;font-weight:normal;">enter your comment</div><div style="position:absolute;left:610.3px;top:594.3px;width:31px;height:31px"><svg width="31" height="31" viewBox="0 0 26 26" style="display:block"><defs><clipPath id="avc2"><circle cx="13" cy="13" r="13"/></clipPath></defs><g clip-path="url(#avc2)"><rect width="26" height="26" fill="#3c3c3c"/><ellipse cx="4" cy="15" rx="4.5" ry="12" fill="#262626"/><ellipse cx="22.5" cy="15" rx="4" ry="12" fill="#2a2a2a"/><ellipse cx="13" cy="5" rx="8" ry="5" fill="#7a7a7a"/><ellipse cx="13.4" cy="15" rx="7.6" ry="10" fill="#bababa"/><ellipse cx="11.8" cy="7.8" rx="4.6" ry="3.8" fill="#c8c8c8"/><ellipse cx="16" cy="6.2" rx="2.6" ry="2.2" fill="#8c8c8c"/><path d="M6.5 11.3 H21" stroke="#3f3f3f" stroke-width="1.4"/><ellipse cx="10.4" cy="12.8" rx="2.5" ry="1.4" fill="#a6a6a6"/><ellipse cx="16.6" cy="12.8" rx="2.5" ry="1.4" fill="#a6a6a6"/><ellipse cx="13.4" cy="18.6" rx="3.6" ry="1" fill="#7e7e7e"/><ellipse cx="13.2" cy="22.2" rx="5.8" ry="3" fill="#d2d2d2"/></g><circle cx="13" cy="13" r="12.6" fill="none" stroke="#a0a0a0" stroke-width="1.3"/></svg></div><div style="position:absolute;left:650px;top:593px;width:359px;height:50.5px;border:1px solid #a8aeb5;border-radius:4px;box-sizing:border-box;"></div><div class="t" style="left:610.00px;top:658.20px;font-size:13px;color:#474747;font-weight:normal;-webkit-text-stroke:0.25px #474747;transform:scaleX(0.9890);transform-origin:0 0;">Process History</div><div style="position:absolute;left:610px;top:681px;width:28px;height:20px;overflow:hidden;"><div style="width:28px;height:28px;border-radius:50%;background:#8dd2f4;position:relative;"><svg style="position:absolute;left:3.5px;top:6.5px" width="21" height="12" viewBox="0 0 21 12"><path d="M3.5 11 Q0.5 11 0.5 8.3 Q0.7 5.6 3.8 5.8 Q4.5 1.8 8.5 2 Q11 0.5 13.5 2.5 Q15.5 3.5 15.3 5.8 Q19.8 5.5 19.8 8.5 Q19.6 11 17 11 Z" fill="#fff"/></svg></div></div><div class="t" style="left:643.60px;top:681.91px;font-size:10.5px;color:#1a64c4;font-weight:bold;transform:scaleX(0.8821);transform-origin:0 0;">Aurora Oh</div><div style="position:absolute;left:644.4px;top:699.5px;width:5px;height:1.5px;background:#9a9a9a;"></div><div style="position:absolute;left:658px;top:699.5px;width:1px;height:1.5px;background:#9a9a9a;"></div><div style="position:absolute;left:664px;top:699.5px;width:4px;height:1.5px;background:#9a9a9a;"></div><div style="position:absolute;left:682px;top:699.5px;width:1px;height:1.5px;background:#9a9a9a;"></div><div style="position:absolute;left:711px;top:699.5px;width:3px;height:1.5px;background:#9a9a9a;"></div><div style="position:absolute;left:728px;top:699.5px;width:1px;height:1.5px;background:#9a9a9a;"></div><div style="position:absolute;left:744px;top:699.5px;width:4px;height:1.5px;background:#9a9a9a;"></div><div style="position:absolute;left:789px;top:699.5px;width:4px;height:1.5px;background:#9a9a9a;"></div><div style="position:absolute;left:812px;top:699.5px;width:4px;height:1.5px;background:#9a9a9a;"></div><div style="position:absolute;left:836px;top:699.5px;width:1px;height:1.5px;background:#9a9a9a;"></div><div style="position:absolute;left:855px;top:699.5px;width:1px;height:1.5px;background:#9a9a9a;"></div><div class="t" style="left:938.9px;top:682.00px;font-size:9.8px;color:#7b8089;font-weight:normal;">Due 03/16/2025</div><div style="position:absolute;left:1040.5px;top:98px;width:16px;height:603px;background:#fafafa;"></div><svg style="position:absolute;left:1040.5px;top:98px" width="16" height="603" viewBox="0 0 16 603"><path d="M8 7.5 L12.5 14 L3.5 14 Z" fill="#878787" stroke="#878787" stroke-width="1.5" stroke-linejoin="round"/><rect x="3.5" y="22.4" width="9" height="363.6" rx="4.5" fill="#878787"/><path d="M3.8 587.5 L12.5 587.5 L8.2 594.5 Z" fill="#878787" stroke="#878787" stroke-width="1.5" stroke-linejoin="round"/></svg><div style="position:absolute;left:578px;top:701px;width:479px;height:17px;background:#fafafa;"></div><svg style="position:absolute;left:578px;top:701px" width="479" height="17" viewBox="0 0 479 17"><path d="M16 4.5 L16 13.5 L9.5 9 Z" fill="#878787" stroke="#878787" stroke-width="1.5" stroke-linejoin="round"/><path d="M463 4.5 L463 13.5 L469.5 9 Z" fill="#878787" stroke="#878787" stroke-width="1.5" stroke-linejoin="round"/></svg><div style="position:absolute;left:630px;top:718px;width:443px;height:1px;background:#e6e8eb;"></div><div style="position:absolute;left:575px;top:719px;width:498px;height:57px;background:#fff;"></div><div style="position:absolute;left:642px;top:733.5px;width:28px;height:28px;border:1px solid #5e6670;border-radius:50%;box-sizing:border-box;"></div><svg style="position:absolute;left:642px;top:733.5px" width="28" height="28" viewBox="0 0 28 28"><circle cx="9" cy="14" r="1.6" fill="#333b44"/><circle cx="14" cy="14" r="1.6" fill="#333b44"/><circle cx="19" cy="14" r="1.6" fill="#333b44"/></svg><div style="position:absolute;left:682px;top:733.3px;width:182.5px;height:28.4px;border:1px solid #6a6e73;border-radius:14.2px;box-sizing:border-box;"></div><div class="t" style="left:747.10px;top:742.69px;font-size:11px;color:#444;font-weight:normal;-webkit-text-stroke:0.35px #444;transform:scaleX(0.9805);transform-origin:0 0;">Send Back</div><div style="position:absolute;left:867px;top:728.3px;width:199px;height:39.4px;border:4px solid #1a9cf5;border-width:4.3px 4px 4.3px 4px;box-sizing:border-box;"></div><div style="position:absolute;left:876.4px;top:733.4px;width:183.8px;height:28.2px;border-radius:14.1px;background:#0b72de;"></div><div class="t" style="left:948.00px;top:741.89px;font-size:11px;color:#fff;font-weight:bold;transform:scaleX(0.9147);transform-origin:0 0;">Approve</div><svg style="position:absolute;left:0;top:740px" width="20" height="36"><path d="M0 25 Q0 36 11 36 H0 Z" fill="#fff"/><path d="M0.5 25 Q0.5 35.5 11 35.5" fill="none" stroke="#e4e4e4" stroke-width="1"/></svg><div style="position:absolute;left:0px;top:98px;width:1px;height:667px;background:#eeeff0;"></div><div style="position:absolute;left:0px;top:96px;width:1073px;height:5px;background:linear-gradient(rgba(0,0,0,0.14),rgba(0,0,0,0.05) 40%,rgba(0,0,0,0));"></div>
</body></html>
